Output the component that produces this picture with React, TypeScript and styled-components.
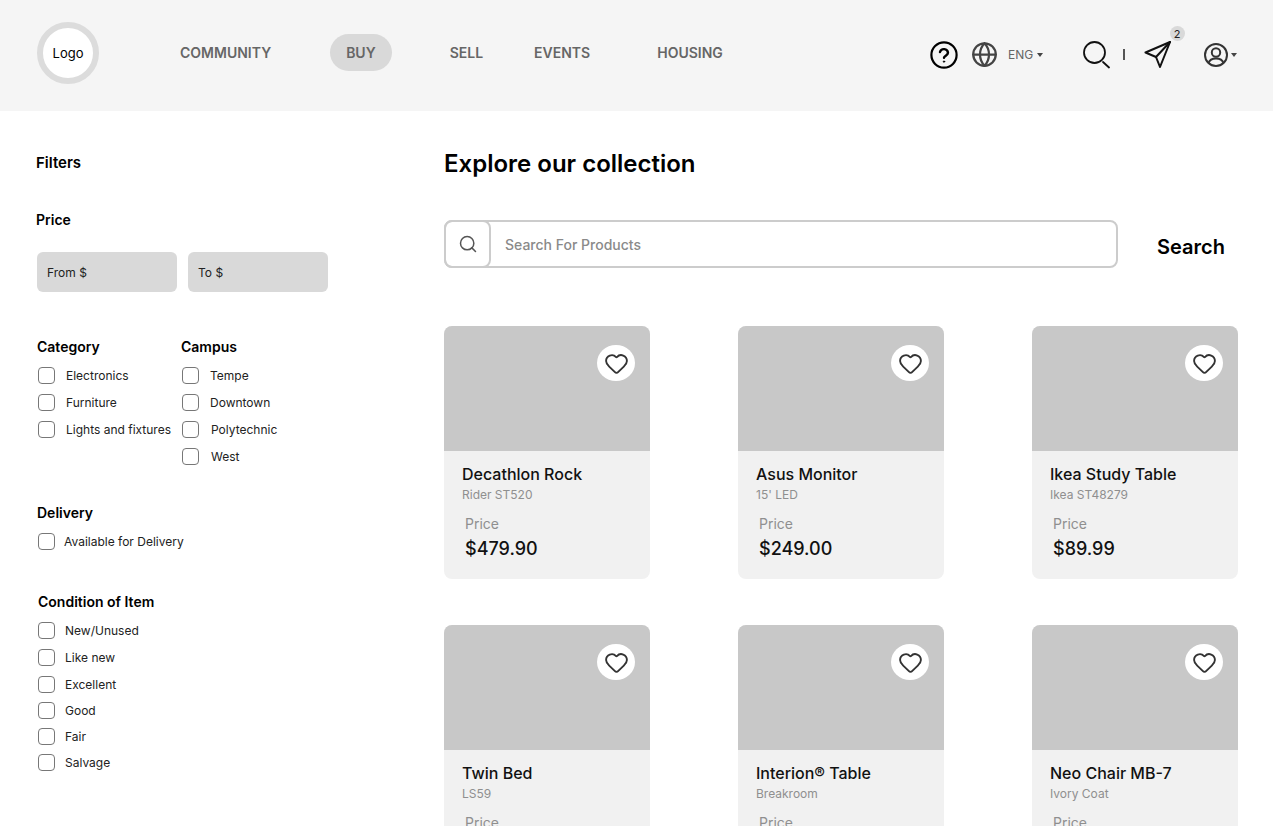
import React from "react";
import styled, { createGlobalStyle } from "styled-components";
import { Globe, Heart, Search as SearchIcon } from "lucide-react";

const Global = createGlobalStyle`
  html, body { margin: 0; padding: 0; background: #fff; }
  body { font-family: Inter, "Liberation Sans", sans-serif; color: #000; }
  #root { height: 826px; overflow: hidden; }
  * { box-sizing: border-box; }
`;

const Page = styled.div`
  width: 1273px;
  height: 826px;
  overflow: hidden;
`;

const Header = styled.header`
  height: 111px;
  background: #f5f5f5;
  display: flex;
  align-items: center;
  padding-left: 37px;
`;

const Logo = styled.div`
  width: 62px;
  height: 62px;
  margin-top: -6px;
  border-radius: 50%;
  background: #fff;
  border: 6px solid #dcdcdc;
  display: flex;
  align-items: center;
  justify-content: center;
  font-size: 13px;
`;

const Nav = styled.nav`
  display: flex;
  align-items: center;
  margin-left: 81px;
  margin-top: -7px;
  width: 750px;
`;

const NavItem = styled.a<{ $gap: number; $active?: boolean }>`
  margin-left: ${(p) => p.$gap}px;
  height: 37px;
  display: flex;
  align-items: center;
  padding: ${(p) => (p.$active ? "0 16px" : "0")};
  border-radius: 19px;
  background: ${(p) => (p.$active ? "#d9d9d9" : "transparent")};
  color: #666;
  font-size: 14px;
  font-weight: 600;
`;

const Tools = styled.div`
  display: flex;
  align-items: center;
  height: 40px;
  margin-left: 0;
  margin-top: -2px;
  color: #000;
`;

const ToolIcon = styled.span<{ $gap?: number; $color?: string }>`
  display: flex;
  margin-left: ${(p) => p.$gap ?? 0}px;
  color: ${(p) => p.$color ?? "#000"};
  position: relative;
`;

const Lang = styled.span`
  margin-left: 10px;
  font-size: 12px;
  color: #666;
`;

const Caret = styled.span<{ $gap: number }>`
  margin-left: ${(p) => p.$gap}px;
  width: 0;
  height: 0;
  border-left: 3px solid transparent;
  border-right: 3px solid transparent;
  border-top: 4px solid #444;
`;

const Divider = styled.span`
  margin-left: 13px;
  width: 1.5px;
  height: 11px;
  background: #555;
`;

const Badge = styled.span`
  position: absolute;
  left: 26px;
  top: -15px;
  width: 15px;
  height: 15px;
  border-radius: 50%;
  background: #d9d9d9;
  color: #222;
  font-size: 11px;
  display: flex;
  align-items: center;
  justify-content: center;
`;

const Body = styled.div`
  display: flex;
`;

const Sidebar = styled.aside`
  width: 408px;
  margin-left: 36px;
  flex: none;
`;

const FiltersTitle = styled.h2`
  margin: 42px 0 0;
  height: 19px;
  line-height: 19px;
  font-size: 15px;
  font-weight: 600;
`;

const GroupTitle = styled.h3<{ $x?: number; $top?: number }>`
  margin: ${(p) => p.$top ?? 0}px 0 0 ${(p) => p.$x ?? 1}px;
  height: 18px;
  line-height: 18px;
  font-size: 14px;
  font-weight: 600;
`;

const PriceInputs = styled.div`
  display: flex;
  gap: 11px;
  margin: 23px 0 0 1px;
`;

const PriceInput = styled.div`
  width: 140px;
  height: 40px;
  background: #d9d9d9;
  border-radius: 6px;
  padding-left: 10px;
  display: flex;
  align-items: center;
  font-size: 12px;
  color: #222;
`;

const Columns = styled.div`
  display: flex;
  margin-top: 46px;
`;

const Column = styled.div<{ $w: number }>`
  width: ${(p) => p.$w}px;
`;

const CheckList = styled.div`
  margin-top: 6px;
  margin-left: 2px;
`;

const CheckRow = styled.label<{ $h: number; $labelGap?: number }>`
  display: flex;
  align-items: center;
  height: ${(p) => p.$h}px;
  gap: ${(p) => p.$labelGap ?? 11}px;
  font-size: 12px;
  color: #222;
`;

const Box = styled.span`
  flex: none;
  width: 17px;
  height: 17px;
  border: 1px solid #777;
  border-radius: 4px;
  background: #fff;
`;

const Main = styled.main`
  width: 794px;
  flex: none;
`;

const Title = styled.h1`
  margin: 38px 0 0;
  height: 30px;
  line-height: 30px;
  font-size: 24px;
  font-weight: 600;
`;

const SearchRow = styled.div`
  display: flex;
  align-items: center;
  margin-top: 41px;
`;

const SearchBar = styled.div`
  width: 674px;
  height: 48px;
  border: 2px solid #ccc;
  border-radius: 8px;
  display: flex;
  align-items: center;
  background: #fff;
`;

const SearchCell = styled.div`
  width: 47px;
  height: 48px;
  margin: -2px 0 -2px -2px;
  border: 2px solid #ccc;
  border-radius: 8px;
  display: flex;
  align-items: center;
  justify-content: center;
  color: #555;
`;

const Placeholder = styled.span`
  margin-left: 14px;
  font-size: 14px;
  font-weight: 500;
  color: #8a8a8a;
`;

const SearchLabel = styled.span`
  margin-left: 39px;
  font-size: 20px;
  font-weight: 600;
  position: relative;
  top: 3px;
`;

const Grid = styled.div`
  display: grid;
  grid-template-columns: repeat(3, 206px);
  column-gap: 88px;
  row-gap: 46px;
  margin-top: 58px;
`;

const Card = styled.article`
  height: 253px;
  border-radius: 8px;
  overflow: hidden;
  background: #f1f1f1;
`;

const CardImage = styled.div`
  height: 125px;
  background: #c8c8c8;
  display: flex;
  justify-content: flex-end;
  padding: 19px 15px 0 0;
`;

const HeartButton = styled.span`
  width: 38px;
  height: 36px;
  border-radius: 50%;
  background: #fff;
  display: flex;
  align-items: center;
  justify-content: center;
  color: #333;
`;

const CardBody = styled.div`
  padding: 14px 18px 0;
`;

const CardName = styled.div`
  font-size: 16px;
  font-weight: 500;
  line-height: 19px;
  color: #111;
`;

const CardSub = styled.div`
  margin-top: 3px;
  font-size: 12px;
  line-height: 15px;
  color: #8f8f8f;
`;

const PriceLabel = styled.div`
  margin: 13px 0 0 3px;
  font-size: 14px;
  line-height: 17px;
  color: #8f8f8f;
`;

const PriceValue = styled.div`
  margin: 5px 0 0 3px;
  font-size: 18px;
  line-height: 24px;
  font-weight: 500;
  color: #111;
`;

const products = [
  ["Decathlon Rock", "Rider ST520", "$479.90"],
  ["Asus Monitor", "15' LED", "$249.00"],
  ["Ikea Study Table", "Ikea ST48279", "$89.99"],
  ["Twin Bed", "LS59", "$129.00"],
  ["Interion® Table", "Breakroom", "$199.00"],
  ["Neo Chair MB-7", "Ivory Coat", "$59.00"],
];

const Check = ({ label, h, gap }: { label: string; h: number; gap?: number }) => (
  <CheckRow $h={h} $labelGap={gap}>
    <Box />
    {label}
  </CheckRow>
);

export default function App() {
  return (
    <Page>
      <Global />
      <Header>
        <Logo>Logo</Logo>
        <Nav>
          <NavItem $gap={0}>COMMUNITY</NavItem>
          <NavItem $gap={59} $active>BUY</NavItem>
          <NavItem $gap={58}>SELL</NavItem>
          <NavItem $gap={51}>EVENTS</NavItem>
          <NavItem $gap={67}>HOUSING</NavItem>
        </Nav>
        <Tools>
          <ToolIcon>
            <svg width="28" height="28" viewBox="0 0 28 28" fill="none" stroke="#000" strokeWidth="2.2" strokeLinecap="round">
              <circle cx="14" cy="14" r="12.6" />
              <path d="M10 11a4.1 4.1 0 0 1 8 .8c0 2.6-4 3-4 5" strokeWidth="2.4" />
              <circle cx="14" cy="20.6" r="0.7" fill="#000" strokeWidth="1" />
            </svg>
          </ToolIcon>
          <ToolIcon $gap={13} $color="#444">
            <Globe size={27} strokeWidth={2} />
          </ToolIcon>
          <Lang>ENG</Lang>
          <Caret $gap={4} />
          <ToolIcon $gap={40}>
            <svg width="27" height="28" viewBox="0 0 27 28" fill="none" stroke="#111" strokeWidth="1.8" strokeLinecap="round">
              <circle cx="11.5" cy="11.5" r="10.5" />
              <path d="M20 21l6 5.5" />
            </svg>
          </ToolIcon>
          <Divider />
          <ToolIcon $gap={19}>
            <svg width="27" height="27" viewBox="0 0 27 27" fill="none" stroke="#111" strokeWidth="2" strokeLinejoin="round" strokeLinecap="round">
              <path d="M26 1L1.5 11.5 12 16l4 10L26 1z" />
              <path d="M26 1L12 16" />
            </svg>
            <Badge>2</Badge>
          </ToolIcon>
          <ToolIcon $gap={33} $color="#333">
            <svg width="24" height="24" viewBox="0 0 24 24" fill="none" stroke="#333" strokeWidth="2">
              <circle cx="12" cy="12" r="11" />
              <circle cx="12" cy="9.5" r="4.2" />
              <path d="M4.5 20c1-3.2 3.6-4.6 7.5-4.6s6.5 1.400 7.500 4.600" />
            </svg>
          </ToolIcon>
          <Caret $gap={3} />
        </Tools>
      </Header>
      <Body>
        <Sidebar>
          <FiltersTitle>Filters</FiltersTitle>
          <GroupTitle $x={0} $top={39}>Price</GroupTitle>
          <PriceInputs>
            <PriceInput>From $</PriceInput>
            <PriceInput>To $</PriceInput>
          </PriceInputs>
          <Columns>
            <Column $w={144}>
              <GroupTitle>Category</GroupTitle>
              <CheckList>
                <Check label="Electronics" h={27} />
                <Check label="Furniture" h={27} />
                <Check label="Lights and fixtures" h={27} />
              </CheckList>
            </Column>
            <Column $w={160}>
              <GroupTitle>Campus</GroupTitle>
              <CheckList>
                <Check label="Tempe" h={27} />
                <Check label="Downtown" h={27} />
                <Check label="Polytechnic" h={27} gap={12} />
                <Check label="West" h={27} gap={12} />
              </CheckList>
            </Column>
          </Columns>
          <GroupTitle $top={34}>Delivery</GroupTitle>
          <CheckList>
            <Check label="Available for Delivery" h={27} gap={9} />
          </CheckList>
          <GroupTitle $x={2} $top={38}>Condition of Item</GroupTitle>
          <CheckList>
            <Check label="New/Unused" h={27} gap={10} />
            <Check label="Like new" h={27} gap={10} />
            <Check label="Excellent" h={27} gap={10} />
            <Check label="Good" h={25.500} gap={10} />
            <Check label="Fair" h={25.500} gap={10} />
            <Check label="Salvage" h={27} gap={10} />
          </CheckList>
        </Sidebar>
        <Main>
          <Title>Explore our collection</Title>
          <SearchRow>
            <SearchBar>
              <SearchCell>
                <SearchIcon size={20} strokeWidth={1.8} />
              </SearchCell>
              <Placeholder>Search For Products</Placeholder>
            </SearchBar>
            <SearchLabel>Search</SearchLabel>
          </SearchRow>
          <Grid>
            {products.map(([name, sub, price]) => (
              <Card key={name}>
                <CardImage>
                  <HeartButton>
                    <Heart size={25} strokeWidth={1.8} />
                  </HeartButton>
                </CardImage>
                <CardBody>
                  <CardName>{name}</CardName>
                  <CardSub>{sub}</CardSub>
                  <PriceLabel>Price</PriceLabel>
                  <PriceValue>{price}</PriceValue>
                </CardBody>
              </Card>
            ))}
          </Grid>
        </Main>
      </Body>
    </Page>
  );
}
